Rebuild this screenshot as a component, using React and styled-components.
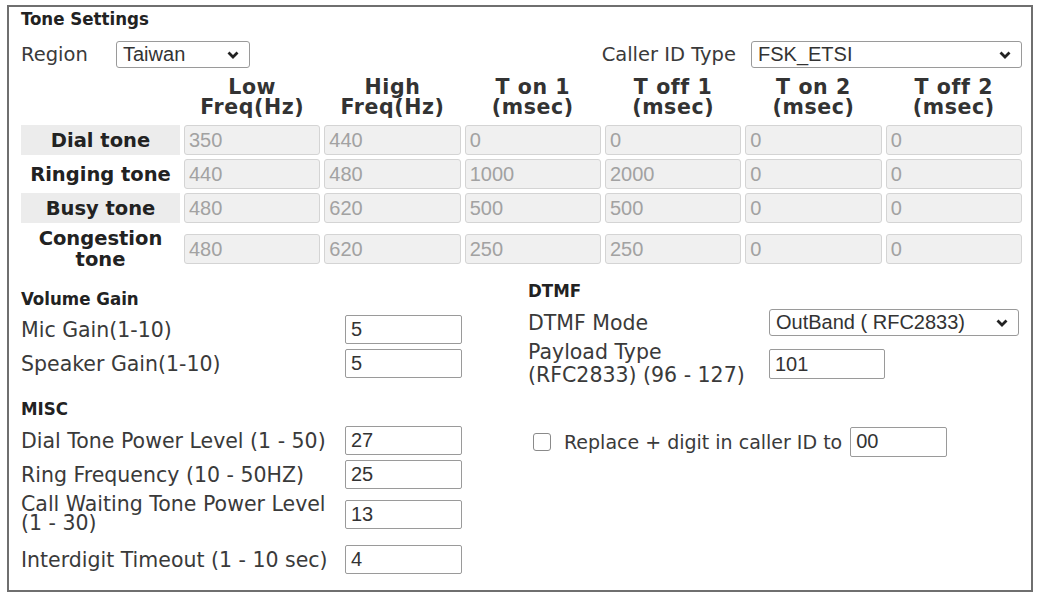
import React from "react";
import styled, { createGlobalStyle } from "styled-components";

const GlobalStyle = createGlobalStyle`
  body {
    margin: 0;
    background: #fff;
  }
`;

const Page = styled.div`
  padding: 5px 0 0 7px;
  font-family: "DejaVu Sans", Verdana, sans-serif;
  font-size: 20.5px;
  color: #3a3a3a;
`;

const Box = styled.div`
  width: 1026px;
  height: 587px;
  box-sizing: border-box;
  border: 2px solid #6f6f6f;
  padding: 2px 9px 0 12px;
`;

const SectionTitle = styled.div`
  font-family: "DejaVu Sans Condensed", "Liberation Sans", sans-serif;
  font-weight: bold;
  font-size: 18.5px;
  line-height: ${(p) => p.$lh || 20}px;
  color: #222;
  margin-top: ${(p) => p.$mt || 0}px;
`;

const TopRow = styled.div`
  display: flex;
  align-items: center;
  height: 27px;
  margin-top: 12px;
`;

const Label = styled.span`
  width: ${(p) => (p.$w ? `${p.$w}px` : "auto")};
  flex-shrink: 0;
  font-size: ${(p) => p.$fs || 20.5}px;
  line-height: ${(p) => p.$lh || 22}px;
  margin-left: ${(p) => (p.$push ? "auto" : "0")};
  margin-right: ${(p) => p.$mr || 0}px;
`;

const SelectBox = styled.div`
  width: ${(p) => p.$w}px;
  height: 27px;
  box-sizing: border-box;
  border: 1px solid #9a9a9a;
  border-radius: 3px;
  display: flex;
  align-items: center;
  justify-content: space-between;
  padding: 0 10px 0 6px;
  font-family: "Liberation Sans", Arial, sans-serif;
  font-size: 20px;
  color: #333;
  background: #fff;
`;

const Chevron = () => (
  <svg width="12" height="8" viewBox="0 0 12 8">
    <path d="M1.5 1.5 L6 6 L10.5 1.5" fill="none" stroke="#222" strokeWidth="2.8" />
  </svg>
);

const Select = ({ value, width }) => (
  <SelectBox $w={width}>
    <span>{value}</span>
    <Chevron />
  </SelectBox>
);

const ToneGrid = styled.div`
  display: grid;
  grid-template-columns: 159px repeat(6, 1fr);
  column-gap: 4px;
  row-gap: 4px;
  margin-top: 9px;
  align-items: center;
`;

const HeadCell = styled.div`
  text-align: center;
  font-weight: bold;
  font-size: 20.5px;
  letter-spacing: 0.6px;
  line-height: 20px;
  color: #333;
  margin-bottom: 4px;
`;

const RowLabel = styled.div`
  align-self: stretch;
  display: flex;
  align-items: center;
  justify-content: center;
  text-align: center;
  font-weight: bold;
  font-size: 19.5px;
  line-height: 21px;
  color: #222;
  background: ${(p) => (p.$shade ? "#ececec" : "transparent")};
  min-height: 30px;
  padding: ${(p) => (p.$tall ? "1px 0" : "0")};
`;

const ToneInput = styled.div`
  height: 30px;
  box-sizing: border-box;
  border: 1px solid #d4d4d4;
  border-radius: 3px;
  background: #f0f0f0;
  padding-left: 4px;
  display: flex;
  align-items: center;
  font-family: "Liberation Sans", Arial, sans-serif;
  font-size: 20px;
  color: #a2a2a2;
`;

const Lower = styled.div`
  display: flex;
  margin-top: 18px;
`;

const LeftCol = styled.div`
  width: 507px;
  flex-shrink: 0;
`;

const RightCol = styled.div`
  flex: 1;
  margin-top: -7px;
`;

const FieldRow = styled.div`
  display: flex;
  align-items: center;
  min-height: ${(p) => p.$h || 29}px;
  margin-top: ${(p) => p.$mt ?? 5}px;
`;

const TextInput = styled.div`
  width: ${(p) => p.$w}px;
  height: ${(p) => p.$h || 29}px;
  box-sizing: border-box;
  border: 1px solid #9a9a9a;
  border-radius: 2px;
  background: #fff;
  padding-left: 5px;
  display: flex;
  align-items: center;
  font-family: "Liberation Sans", Arial, sans-serif;
  font-size: 20px;
  color: #333;
`;

const Check = styled.span`
  width: 16px;
  height: 16px;
  border: 1px solid #8a8a8a;
  border-radius: 3px;
  background: #fff;
  margin: 0 13px 0 5px;
  flex-shrink: 0;
`;

const headers = [
  ["Low", "Freq(Hz)"],
  ["High", "Freq(Hz)"],
  ["T on 1", "(msec)"],
  ["T off 1", "(msec)"],
  ["T on 2", "(msec)"],
  ["T off 2", "(msec)"],
];

const tones = [
  { name: "Dial tone", values: [350, 440, 0, 0, 0, 0] },
  { name: "Ringing tone", values: [440, 480, 1000, 2000, 0, 0] },
  { name: "Busy tone", values: [480, 620, 500, 500, 0, 0] },
  { name: ["Congestion", "tone"], values: [480, 620, 250, 250, 0, 0] },
];

const App = () => {
  return (
    <Page>
      <GlobalStyle />
      <Box>
        <SectionTitle>Tone Settings</SectionTitle>
        <TopRow>
          <Label $w={95} $fs={19.5}>Region</Label>
          <Select value="Taiwan" width={134} />
          <Label $push $mr={15} $fs={19.5}>Caller ID Type</Label>
          <Select value="FSK_ETSI" width={271} />
        </TopRow>

        <ToneGrid>
          <div />
          {headers.map((h) => (
            <HeadCell key={h.join()}>
              {h[0]}
              <br />
              {h[1]}
            </HeadCell>
          ))}
          {tones.map((t, i) => (
            <React.Fragment key={i}>
              <RowLabel $shade={i % 2 === 0} $tall={Array.isArray(t.name)}>
                {Array.isArray(t.name) ? (
                  <span>
                    {t.name[0]}
                    <br />
                    {t.name[1]}
                  </span>
                ) : (
                  t.name
                )}
              </RowLabel>
              {t.values.map((v, j) => (
                <ToneInput key={j}>{v}</ToneInput>
              ))}
            </React.Fragment>
          ))}
        </ToneGrid>

        <Lower>
          <LeftCol>
            <SectionTitle>Volume Gain</SectionTitle>
            <FieldRow $mt={6}>
              <Label $w={324}>Mic Gain(1-10)</Label>
              <TextInput $w={117}>5</TextInput>
            </FieldRow>
            <FieldRow>
              <Label $w={324}>Speaker Gain(1-10)</Label>
              <TextInput $w={117}>5</TextInput>
            </FieldRow>

            <SectionTitle $mt={21}>MISC</SectionTitle>
            <FieldRow $mt={7}>
              <Label $w={324}>Dial Tone Power Level (1 - 50)</Label>
              <TextInput $w={117}>27</TextInput>
            </FieldRow>
            <FieldRow>
              <Label $w={324}>Ring Frequency (10 - 50HZ)</Label>
              <TextInput $w={117}>25</TextInput>
            </FieldRow>
            <FieldRow $h={40}>
              <Label $w={324} $lh={19}>
                Call Waiting Tone Power Level
                <br />
                (1 - 30)
              </Label>
              <TextInput $w={117}>13</TextInput>
            </FieldRow>
            <FieldRow $mt={11}>
              <Label $w={324}>Interdigit Timeout (1 - 10 sec)</Label>
              <TextInput $w={117}>4</TextInput>
            </FieldRow>
          </LeftCol>

          <RightCol>
            <SectionTitle $lh={17}>DTMF</SectionTitle>
            <FieldRow $mt={10} $h={27}>
              <Label $w={241}>DTMF Mode</Label>
              <Select value="OutBand ( RFC2833)" width={250} />
            </FieldRow>
            <FieldRow $mt={5} $h={46}>
              <Label $w={241} $lh={23}>
                Payload Type
                <br />
                (RFC2833) (96 - 127)
              </Label>
              <TextInput $w={116} $h={30}>101</TextInput>
            </FieldRow>
            <FieldRow $mt={39} $h={31}>
              <Check />
              <Label $mr={8} $fs={19}>Replace + digit in caller ID to</Label>
              <TextInput $w={97} $h={30}>00</TextInput>
            </FieldRow>
          </RightCol>
        </Lower>
      </Box>
    </Page>
  );
};

export default App;
